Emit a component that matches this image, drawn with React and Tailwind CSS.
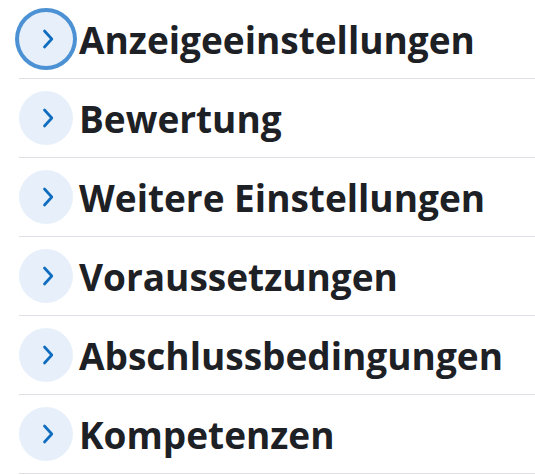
const sections = [
  "Anzeigeeinstellungen",
  "Bewertung",
  "Weitere Einstellungen",
  "Voraussetzungen",
  "Abschlussbedingungen",
  "Kompetenzen",
];

function Chevron() {
  return (
    <svg width="12" height="20" viewBox="0 0 12 20" fill="none" className="ml-[3px]">
      <path d="M2.5 2 L9.8 10 L2.5 18" stroke="#0f6cbf" strokeWidth="2.7" strokeLinecap="round" strokeLinejoin="round" />
    </svg>
  );
}

export default function App() {
  return (
    <div className="bg-white w-[535px] h-[475px] pl-[19px] font-['Open_Sans',sans-serif]">
      {sections.map((title, i) => (
        <div key={title} className="flex items-center h-[79px] border-b border-[#dee2e6]">
          <div
            className={`flex items-center justify-center w-[54px] h-[54px] shrink-0 rounded-full bg-[#e7f0fa] ${
              i === 0 ? "ring-[4px] ring-[#4b91d3]" : ""
            }`}
          >
            <Chevron />
          </div>
          <h3 className="ml-[6px] text-[37px] font-bold text-[#1d2125] leading-none">{title}</h3>
        </div>
      ))}
    </div>
  );
}
